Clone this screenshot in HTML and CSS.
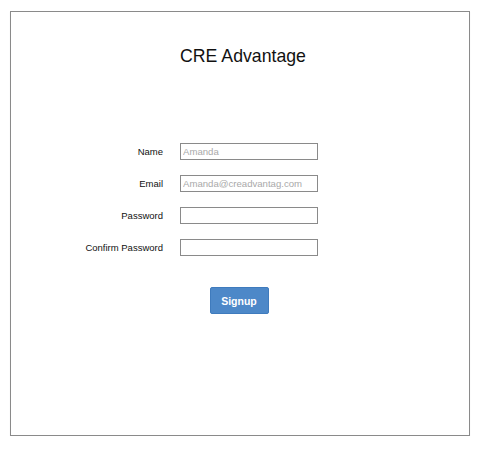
FILE: index.html
```html
<!DOCTYPE html>
<html>
<head>
<meta charset="utf-8">
<link rel="stylesheet" href="styles.css">
</head>
<body>
<div class="frame">
  <h1 class="title">CRE Advantage</h1>
  <form class="form">
    <label class="label" for="name">Name</label>
    <input class="field" id="name" type="text" placeholder="Amanda">
    <label class="label" for="email">Email</label>
    <input class="field" id="email" type="text" placeholder="Amanda@creadvantag.com">
    <label class="label" for="pw">Password</label>
    <input class="field" id="pw" type="password">
    <label class="label" for="pw2">Confirm Password</label>
    <input class="field" id="pw2" type="password">
  </form>
  <div class="actions">
    <button class="btn" type="button">Signup</button>
  </div>
</div>
</body>
</html>
```
FILE: styles.css
```css
html, body {
  margin: 0;
  padding: 0;
  background: #fff;
}
body {
  padding: 11px 10px 0 10px;
  font-family: "Liberation Sans", Arial, sans-serif;
  color: #111;
}
.frame {
  box-sizing: border-box;
  width: 460px;
  height: 425px;
  border: 1px solid #8a8a8a;
  box-shadow: 0 1px 1px rgba(0,0,0,0.08);
}
.title {
  margin: 33px 0 0 0;
  font-size: 17.7px;
  font-weight: normal;
  line-height: 22px;
  text-align: center;
  padding-left: 6px;
  color: #111;
}
.form {
  display: grid;
  grid-template-columns: 100px 138px;
  column-gap: 17px;
  row-gap: 15px;
  margin: 76px 0 0 52px;
  align-items: center;
}
.label {
  font-size: 9.5px;
  text-align: right;
  color: #111;
}
.field {
  box-sizing: border-box;
  width: 138px;
  height: 17px;
  margin: 0;
  padding: 0 2px;
  border: 1px solid #8a8a8a;
  border-radius: 0;
  font-family: "Liberation Sans", Arial, sans-serif;
  font-size: 9.6px;
  outline: none;
}
.field::placeholder {
  color: #a9a9a9;
}
.actions {
  display: flex;
  justify-content: center;
  margin-top: 31px;
  padding-right: 2px;
}
.btn {
  width: 59px;
  height: 27px;
  border: 1px solid #3f7bbd;
  border-radius: 2px;
  background: #4d88c8;
  color: #fff;
  font-family: "Liberation Sans", Arial, sans-serif;
  font-weight: bold;
  font-size: 10.5px;
  padding: 0;
}
```
